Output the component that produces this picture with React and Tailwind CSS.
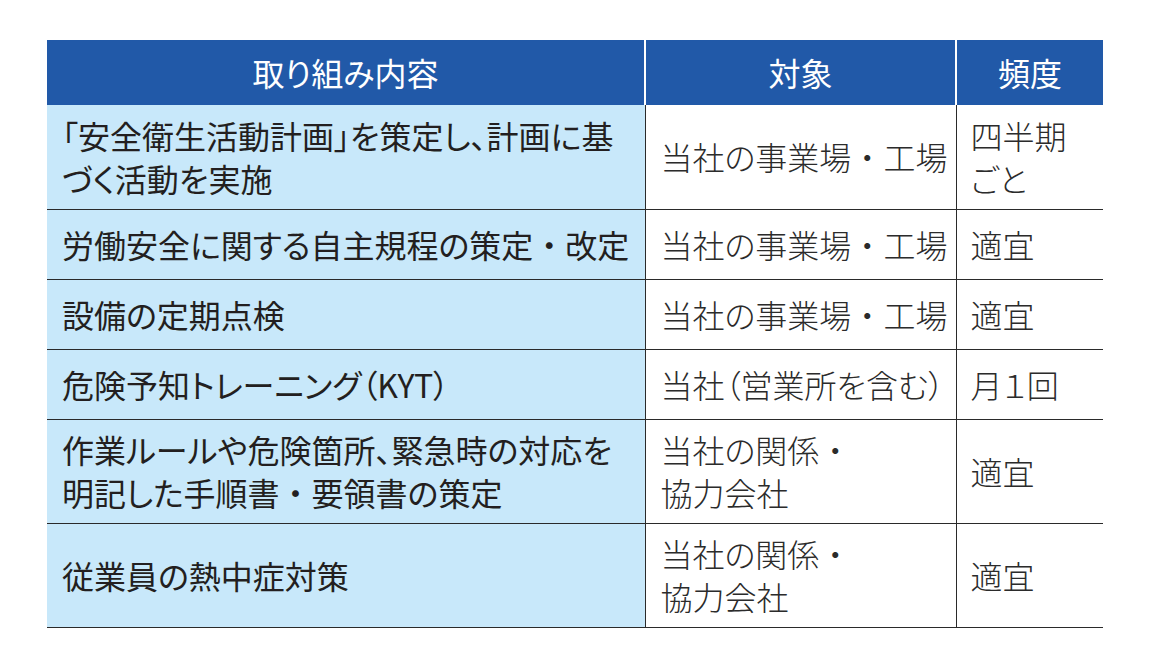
import React from 'react';

const rows = [
	{
		what: ['「安全衛生活動計画」を策定し、計画に基', 'づく活動を実施'],
		target: ['当社の事業場・工場'],
		freq: ['四半期', 'ごと'],
		tall: true,
	},
	{
		what: ['労働安全に関する自主規程の策定・改定'],
		target: ['当社の事業場・工場'],
		freq: ['適宜'],
	},
	{
		what: ['設備の定期点検'],
		target: ['当社の事業場・工場'],
		freq: ['適宜'],
	},
	{
		what: ['危険予知トレーニング（KYT）'],
		target: ['当社（営業所を含む）'],
		freq: ['月１回'],
	},
	{
		what: ['作業ルールや危険箇所、緊急時の対応を', '明記した手順書・要領書の策定'],
		target: ['当社の関係・', '協力会社'],
		freq: ['適宜'],
		tall: true,
	},
	{
		what: ['従業員の熱中症対策'],
		target: ['当社の関係・', '協力会社'],
		freq: ['適宜'],
		tall: true,
	},
];

// middle dot keeps its full width, the rest of the text is set with palt
function Line({ text }) {
	const parts = text.split('・');
	return (
		<div className="whitespace-nowrap">
			{parts.map((p, i) => (
				<React.Fragment key={i}>
					{i > 0 && <span className="[font-feature-settings:normal]">・</span>}
					{p}
				</React.Fragment>
			))}
		</div>
	);
}

function Lines({ lines }) {
	return lines.map((l, i) => <Line key={i} text={l} />);
}

export default function App() {
	return (
		<div className="min-h-screen bg-white pt-10 pl-[47px] text-[#231f20] font-['Noto_Sans_CJK_JP','Noto_Sans',sans-serif] [font-feature-settings:'palt']">
			<table className="border-collapse table-fixed w-[1056px] text-[32px] leading-[43px]">
				<colgroup>
					<col className="w-[598px]" />
					<col className="w-[311px]" />
					<col className="w-[147px]" />
				</colgroup>
				<thead>
					<tr className="h-[65px] bg-[#2159a8] text-white">
						<th className="font-normal text-center border-r-2 border-white">取り組み内容</th>
						<th className="font-normal text-center border-r-2 border-white">対象</th>
						<th className="font-normal text-center">頻度</th>
					</tr>
				</thead>
				<tbody>
					{rows.map((r, i) => (
						<tr
							key={i}
							className={`${r.tall ? 'h-[104px]' : 'h-[70px]'} border-b-[1.5px] border-[#2a2a2a]`}
						>
							<td className="bg-[#c8e8fa] pl-[15px] align-middle border-r border-[#2a2a2a]">
								<Lines lines={r.what} />
							</td>
							<td className="pl-[15px] align-middle font-light text-[#2b2b2b] border-r border-[#2a2a2a]">
								<Lines lines={r.target} />
							</td>
							<td className="pl-[14px] align-middle font-light text-[#2b2b2b]">
								<Lines lines={r.freq} />
							</td>
						</tr>
					))}
				</tbody>
			</table>
		</div>
	);
}
